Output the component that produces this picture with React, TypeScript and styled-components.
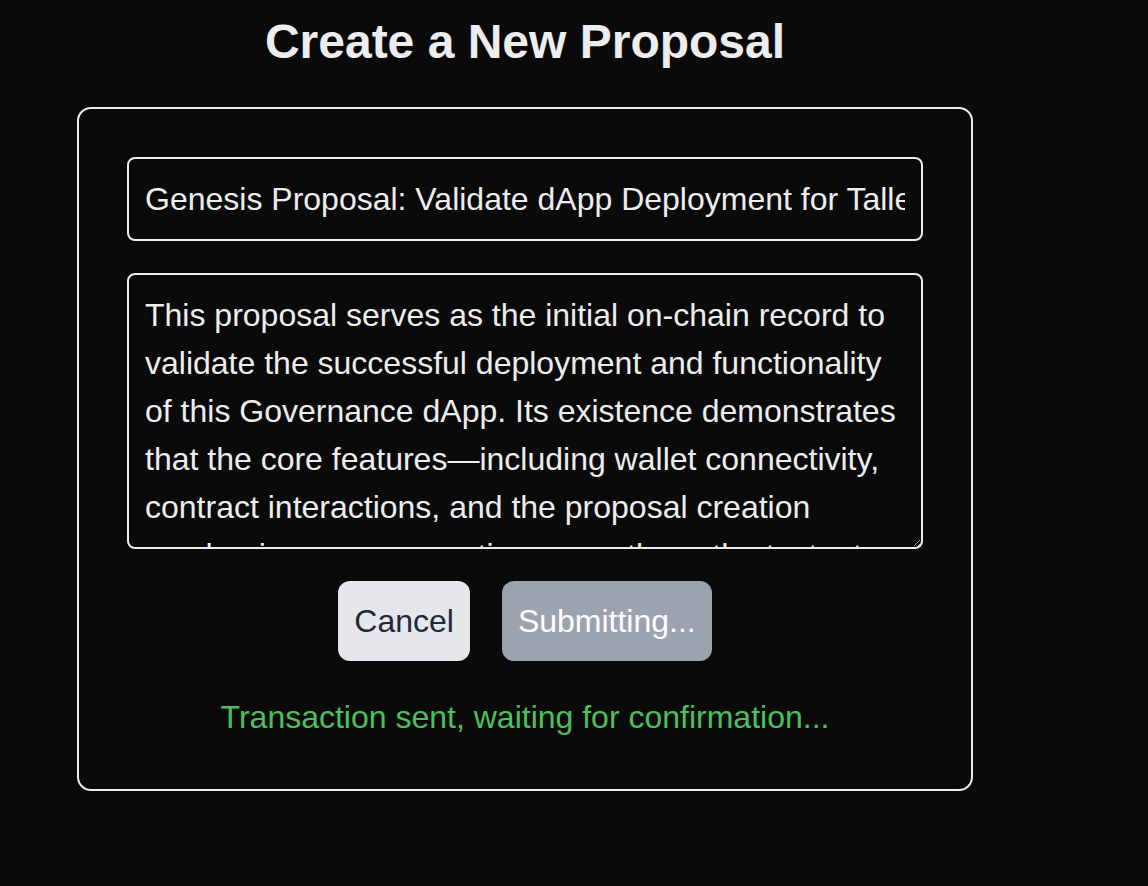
import React from "react";
import styled, { createGlobalStyle } from "styled-components";

const GlobalStyle = createGlobalStyle`
  html, body {
    margin: 0;
    padding: 0;
    background: #0a0a0a;
    color: #ededed;
    font-family: "Liberation Sans", Arial, Helvetica, sans-serif;
  }
  * { box-sizing: border-box; }
`;

const Page = styled.main`
  min-height: 886px;
  padding: 10px 0 0 77px;
`;

const Column = styled.div`
  width: 896px;
  display: flex;
  flex-direction: column;
  align-items: stretch;
`;

const Title = styled.h1`
  margin: 0 0 33px;
  font-size: 48px;
  line-height: 64px;
  font-weight: 700;
  text-align: center;
  color: #ededed;
`;

const Card = styled.form`
  border: 2px solid #ededed;
  border-radius: 14px;
  padding: 48px;
  display: flex;
  flex-direction: column;
  gap: 32px;
`;

const fieldBase = `
  width: 100%;
  background: transparent;
  color: #ededed;
  border: 2px solid #ededed;
  border-radius: 8px;
  padding: 16px;
  font-family: "Liberation Sans", Arial, Helvetica, sans-serif;
  font-size: 32px;
  line-height: 48px;
  outline: none;
  margin: 0;
  display: block;
`;

const TitleInput = styled.input`
  ${fieldBase}
  height: 84px;
`;

const BodyArea = styled.textarea`
  ${fieldBase}
  height: 276px;
  resize: vertical;
  scrollbar-width: none;
  color-scheme: dark;
  &::-webkit-scrollbar { display: none; }
`;

const ButtonRow = styled.div`
  display: flex;
  justify-content: center;
  gap: 32px;
`;

const Button = styled.button<{ $variant: "secondary" | "primary" }>`
  border: none;
  border-radius: 12px;
  padding: 16px;
  font-family: "Liberation Sans", Arial, Helvetica, sans-serif;
  font-size: 32px;
  line-height: 48px;
  cursor: pointer;
  background: ${(p) => (p.$variant === "secondary" ? "#e5e7eb" : "#9ca3af")};
  color: ${(p) => (p.$variant === "secondary" ? "#1f2937" : "#ffffff")};
`;

const Status = styled.p`
  margin: 0;
  text-align: center;
  font-size: 32px;
  line-height: 48px;
  color: #4cc05b;
`;

const description =
  "This proposal serves as the initial on-chain record to validate the successful deployment and functionality of this Governance dApp. Its existence demonstrates that the core features\u2014including wallet connectivity, contract interactions, and the proposal creation mechanism\u2014are operating correctly on the testnet environment, providing a verifiable foundation for future governance activity.";

export default function App() {
  return (
    <>
      <GlobalStyle />
      <Page>
        <Column>
          <Title>Create a New Proposal</Title>
          <Card onSubmit={(e) => e.preventDefault()}>
            <TitleInput
              type="text"
              defaultValue="Genesis Proposal: Validate dApp Deployment for Tallet Governance"
            />
            <BodyArea defaultValue={description} />
            <ButtonRow>
              <Button type="button" $variant="secondary">Cancel</Button>
              <Button type="submit" $variant="primary" disabled>Submitting...</Button>
            </ButtonRow>
            <Status>Transaction sent, waiting for confirmation...</Status>
          </Card>
        </Column>
      </Page>
    </>
  );
}
